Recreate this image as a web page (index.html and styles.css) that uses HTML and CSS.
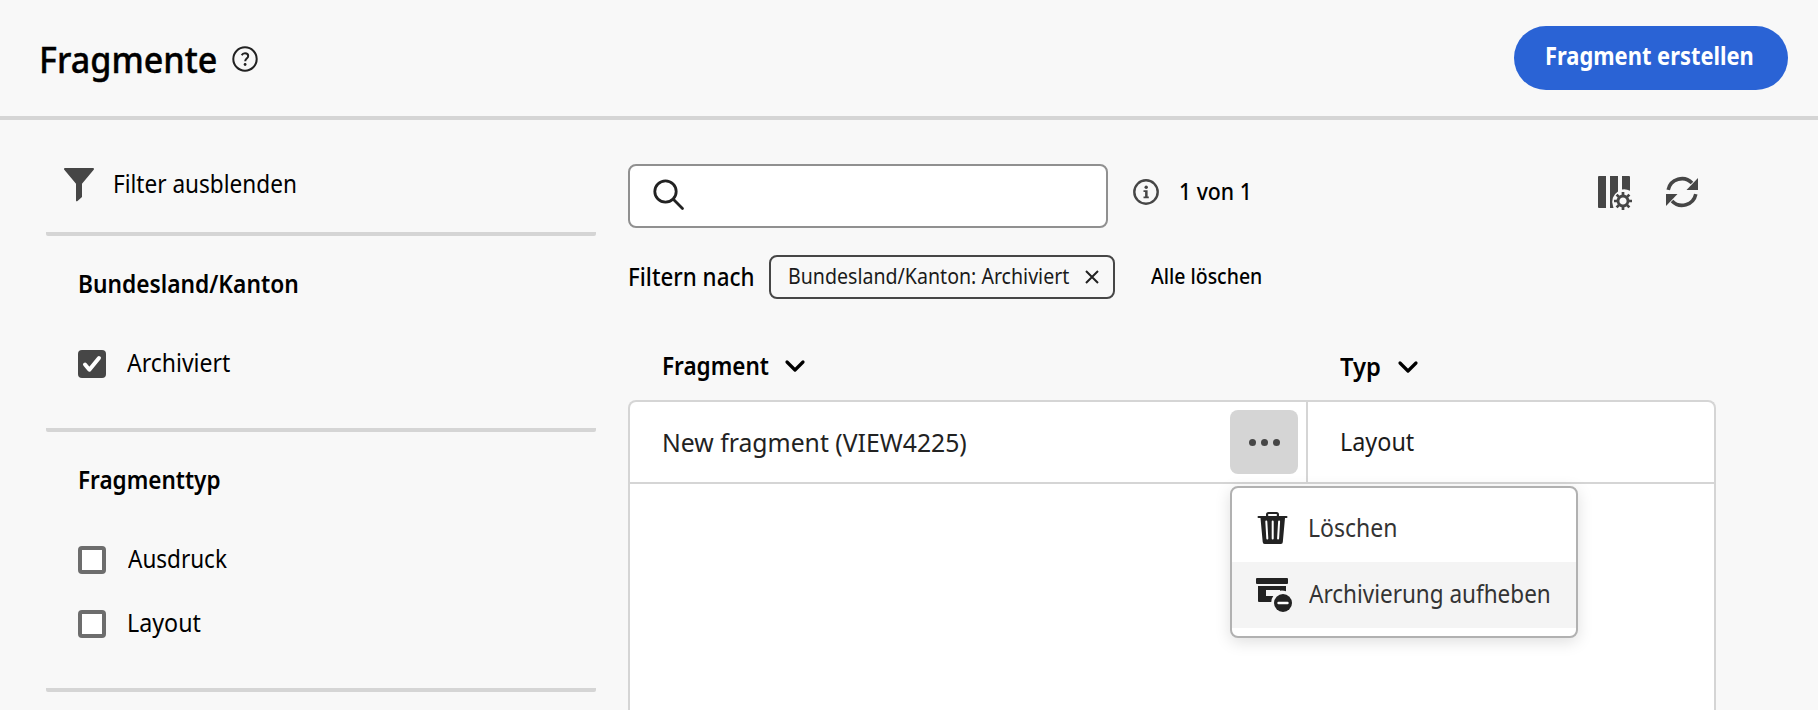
FILE: index.html
```
<!DOCTYPE html>
<html lang="de">
<head>
<meta charset="utf-8">
<title>Fragmente</title>
<link rel="stylesheet" href="styles.css">
</head>
<body>
<header class="header">
  <h1 class="title t">Fragmente</h1>
  <svg class="help" width="26" height="26" viewBox="0 0 26 26" fill="none" stroke="#222"><circle cx="13" cy="13" r="11.7" stroke-width="2"/><path d="M9.700 9.200c.7-1.400 1.900-2 3.300-2 2 0 3.200 1.100 3.200 2.700 0 2.600-3 2.800-3 5.300" stroke-width="2"/><circle cx="13.100" cy="18.500" r="1.400" fill="#222" stroke="none"/></svg>
  <button class="create"><span class="t create-text">Fragment erstellen</span></button>
</header>
<main class="content">
  <aside class="filters">
    <div class="toggle">
      <svg width="30" height="33" viewBox="0 0 30 33" fill="#464646"><path d="M1 0h28c1 0 1.300 1 .7 1.700L18 15.700V29l-4.500 4c-.8.600-1.500.2-1.500-.6V15.700L.3 1.700C-.3 1 0 0 1 0z"/></svg>
      <span class="t w-toggle">Filter ausblenden</span>
    </div>
    <section class="group group-state">
      <h2 class="t w-state">Bundesland/Kanton</h2>
      <label class="option"><span class="box checked"><svg width="28" height="28" viewBox="0 0 28 28" fill="none" stroke="#fff" stroke-width="4" stroke-linecap="round" stroke-linejoin="round"><path d="M7 14.500l4.400 5.200L21 8"/></svg></span><span class="t w-archived">Archiviert</span></label>
    </section>
    <section class="group group-type">
      <h2 class="t w-type">Fragmenttyp</h2>
      <label class="option"><span class="box"></span><span class="t w-expr">Ausdruck</span></label>
      <label class="option"><span class="box"></span><span class="t w-layout">Layout</span></label>
    </section>
  </aside>
  <section class="list">
    <div class="toolbar">
      <div class="search"><svg width="32" height="32" viewBox="0 0 32 32" fill="none" stroke="#222" stroke-width="2.800" stroke-linecap="round"><circle cx="12.500" cy="12.500" r="10.700"/><path d="M20.300 20.300L29.500 29.500"/></svg></div>
      <svg class="info" width="26" height="26" viewBox="0 0 26 26"><circle cx="13" cy="13" r="11.700" fill="none" stroke="#464646" stroke-width="2.400"/><circle cx="13.200" cy="8.300" r="1.700" fill="#464646"/><path d="M10.500 11.200h4.100v6.300h1.200v1.700h-5.300v-1.700h1.600v-4.600h-1.600z" fill="#464646"/></svg>
      <span class="t count">1 von 1</span>
      <svg class="columns" width="36" height="36" viewBox="0 0 36 36" fill="#464646"><path d="M1 0h7v32H1a1 1 0 0 1-1-1V1a1 1 0 0 1 1-1zM12 0h8v15.500a12 12 0 0 0-5 14.500l.5 2H12zM24 0h7a1 1 0 0 1 1 1v13.800a12 12 0 0 0-8-1.300z"/><g transform="translate(25 25)"><circle r="5" fill="none" stroke="#464646" stroke-width="2.800"/><path d="M0-9v4M0 5v4M-9 0h4M5 0h4M-6.400-6.400l2.900 2.900M3.500 3.500l2.900 2.900M-6.400 6.400l2.900-2.900M3.500-3.500l2.900-2.900" stroke="#464646" stroke-width="2.700"/></g></svg>
      <svg class="refresh" width="32" height="32" viewBox="0 0 32 32"><g id="arc"><path d="M2.200 13.800A14 14 0 0 1 26 7" fill="none" stroke="#464646" stroke-width="3.600"/><path d="M32 2v12H20.500z" fill="#464646"/></g><use href="#arc" transform="rotate(180 16 16)"/></svg>
    </div>
    <div class="active">
      <span class="t w-by">Filtern nach</span>
      <div class="chip"><span class="t w-chip">Bundesland/Kanton: Archiviert</span><svg width="14" height="14" viewBox="0 0 14 14" stroke="#222" stroke-width="2"><path d="M1 1l12 12M13 1L1 13"/></svg></div>
      <span class="t clear">Alle löschen</span>
    </div>
    <div class="columns-head">
      <div class="head head-name"><span class="t w-name">Fragment</span><svg width="20" height="12" viewBox="0 0 20 12" fill="none" stroke="#000" stroke-width="3.200" stroke-linecap="round" stroke-linejoin="round"><path d="M2 2l8 8 8-8"/></svg></div>
      <div class="head head-kind"><span class="t w-kind">Typ</span><svg width="20" height="12" viewBox="0 0 20 12" fill="none" stroke="#000" stroke-width="3.200" stroke-linecap="round" stroke-linejoin="round"><path d="M2 2l8 8 8-8"/></svg></div>
    </div>
    <div class="table">
      <div class="row">
        <div class="cell-name"><span class="t name">New fragment (VIEW4225)</span>
          <div class="more"><i></i><i></i><i></i>
            <div class="menu">
              <div class="item"><svg width="36" height="36" viewBox="0 0 36 36" fill="#222"><path d="M10 6V3.500A2.500 2.500 0 0 1 12.500 1h8A2.500 2.500 0 0 1 23 3.500V6h-2.200V3h-8.600v3z"/><path d="M2.500 5h28a1 1 0 0 1 0 2H29l-2.200 24a2 2 0 0 1-2 2H8.700a2 2 0 0 1-2-2L4.500 7h-2a1 1 0 0 1 0-2z"/><path d="M10.300 10.500l1 17M16.700 10.500v17M23.100 10.500l-1 17" stroke="#fff" stroke-width="2" stroke-linecap="round"/></svg><span class="t w-delete">Löschen</span></div>
              <div class="item hover"><svg width="36" height="36" viewBox="0 0 36 36" fill="#222"><rect x="0" y="1" width="32" height="6" rx="1"/><path d="M2 9h28v5.300a11 11 0 0 0-6-.6V13H10v6h7.300a10 10 0 0 0-2 6H3a1 1 0 0 1-1-1z"/><circle cx="27" cy="26" r="9"/><path d="M22.500 26h9" stroke="#fff" stroke-width="2.400" stroke-linecap="round"/></svg><span class="t w-unarchive">Archivierung aufheben</span></div>
            </div>
          </div>
        </div>
        <div class="cell-kind"><span class="t w-cell">Layout</span></div>
      </div>
    </div>
  </section>
</main>
</body>
</html>
```
FILE: styles.css
```
* { box-sizing: border-box; }
body {
  margin: 0;
  height: 710px;
  overflow: hidden;
  background: #f8f8f8;
  color: #000;
  font: 400 25px/32px "Noto Sans", "Open Sans", sans-serif;
}
svg { display: block; flex: none; overflow: visible; }
h1, h2 { margin: 0; }

/* condensed text, scaled from its left edge */
.t { display: block; flex: none; white-space: nowrap; transform-origin: 0 50%; }

.header {
  display: flex;
  align-items: center;
  height: 120px;
  padding: 0 30px 0 39px;
  border-bottom: 4px solid #d5d5d5;
}
.title { width: 193px; font-size: 36px; font-weight: 500; line-height: 48px; padding-top: 3px; transform: scaleX(.948); -webkit-text-stroke: .4px #000; }
.help { margin-top: 2px; }
.create {
  width: 274px;
  height: 64px;
  margin-left: auto;
  padding: 0 0 6px 31px;
  border: 0;
  border-radius: 32px;
  background: #2a63d5;
  color: #fff;
  font: inherit;
  font-weight: 700;
  text-align: left;
}
.create-text { transform: scaleX(.875); }

.content { display: flex; height: 590px; }
.filters { width: 550px; margin-left: 46px; flex: none; }
.toggle { display: flex; gap: 19px; height: 116px; padding: 48px 0 0 18px; border-bottom: 4px solid #d5d5d5; border-radius: 2px; }
.w-toggle { margin-top: -1px; transform: scaleX(.903); }
.filters h2 { font-size: 25px; font-weight: 600; line-height: 32px; }
.group { padding: 31px 0 0 32px; border-bottom: 4px solid #d5d5d5; border-radius: 2px; }
.group-state { height: 196px; }
.group-type { height: 260px; }
.option { display: flex; align-items: center; gap: 21px; height: 28px; margin-top: 36px; }
.option .t { margin-top: -4px; }
h2 + .option { margin-top: 51px; }
.box { width: 28px; height: 28px; border: 4px solid #6d6d6d; border-radius: 4px; background: #fff; }
.box.checked { border: 0; background: #464646; }
.w-state { transform: scaleX(.91); }
.w-archived { transform: scaleX(.92); }
.w-type { transform: scaleX(.9); }
.w-expr { margin-left: 1px; transform: scaleX(.9); }
.w-layout { transform: scaleX(.93); }

.list { width: 1088px; margin-left: 32px; padding-top: 44px; display: flex; flex-direction: column; }
.toolbar { display: flex; align-items: center; height: 64px; flex: none; }
.search { width: 480px; height: 64px; padding: 13px 0 0 23px; border: 2px solid #909090; border-radius: 8px; background: #fff; }
.info { margin: -8px 0 0 25px; }
.count { margin: -10px 0 0 20px; width: 82px; font-size: 24px; font-weight: 500; transform: scaleX(.885); }
.columns { margin: -4px 32px 0 auto; }
.refresh { margin: -8px 18px 0 0; }

.active { display: flex; align-items: center; height: 44px; margin-top: 27px; flex: none; }
.w-by { width: 141px; margin-top: -2px; font-weight: 500; transform: scaleX(.895); }
.chip { display: flex; align-items: center; gap: 17px; width: 346px; height: 44px; padding-left: 17px; border: 2px solid #464646; border-radius: 8px; }
.w-chip { width: 280px; font-size: 22px; transform: scaleX(.89); color: #1b1b1b; margin-top: -4px; }
.clear { margin: -5px 0 0 36px; font-size: 22px; font-weight: 500; transform: scaleX(.885); }

.columns-head { display: flex; height: 101px; padding-top: 51px; flex: none; }
.head { display: flex; align-items: center; height: 32px; font-weight: 600; }
.head .t { margin-top: -2px; }
.head-name { width: 678px; padding-left: 34px; }
.w-name { width: 123px; transform: scaleX(.9); }
.head-kind { padding: 0 0 0 34px; margin-top: 1px; }
.w-kind { width: 58px; transform: scaleX(.95); }

.table { flex: 1; border: 2px solid #d5d5d5; border-bottom: 0; border-radius: 8px 8px 0 0; background: #fff; color: #1b1b1b; }
.row { display: flex; height: 82px; border-bottom: 2px solid #d5d5d5; }
.cell-name { display: flex; justify-content: space-between; width: 678px; padding: 8px 8px 0 32px; border-right: 2px solid #d5d5d5; }
.name { margin-top: 16px; color: #222; transform: scaleX(.99); }
.cell-kind { padding: 23px 0 0 32px; }
.w-cell { transform: scaleX(.935); }
.more { position: relative; display: flex; align-items: center; justify-content: center; gap: 5px; width: 68px; height: 64px; border-radius: 8px; background: #d5d5d5; }
.more i { width: 7px; height: 7px; border-radius: 50%; background: #464646; }

.menu {
  position: absolute;
  left: 0;
  top: 76px;
  width: 348px;
  height: 152px;
  padding-top: 8px;
  border: 2px solid #b1b1b1;
  border-radius: 8px;
  background: #fff;
  box-shadow: 0 4px 16px rgba(0, 0, 0, .13);
}
.item { display: flex; align-items: center; gap: 17px; height: 66px; padding-left: 24px; color: #333; }
.item.hover { background: #f4f4f4; }
.item .t { margin-top: -4px; }
.w-delete { margin-left: -1px; transform: scaleX(.92); }
.w-unarchive { transform: scaleX(.9); }
```
